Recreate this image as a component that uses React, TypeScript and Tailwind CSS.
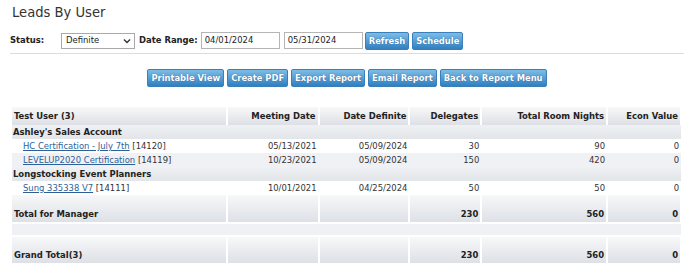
import React from "react";

const F = { fontFamily: '"DejaVu Sans Condensed", "DejaVu Sans", Verdana, sans-serif' };

function Btn({ children }: { children: React.ReactNode }) {
  return (
    <button className="h-[18px] rounded-[2px] border border-[#3a7fba] bg-gradient-to-b from-[#7cbce6] to-[#2f7fc0] px-[3px] text-[9.3px] font-bold leading-none text-white [text-shadow:0_0_1px_#1d5a8c]">
      {children}
    </button>
  );
}

const hdr = "bg-gradient-to-b from-[#f7f8f9] to-[#dde0e5] border-r-2 border-white";
const grp = "bg-gradient-to-b from-[#eff1f3] to-[#e2e5e9]";

export default function App() {
  const rows = [
    { type: "group", name: "Ashley's Sales Account" },
    { type: "data", name: "HC Certification - July 7th", id: "14120", md: "05/13/2021", dd: "05/09/2024", del: "30", rn: "90", ev: "0", alt: false },
    { type: "data", name: "LEVELUP2020 Certification", id: "14119", md: "10/23/2021", dd: "05/09/2024", del: "150", rn: "420", ev: "0", alt: true },
    { type: "group", name: "Longstocking Event Planners" },
    { type: "data", name: "Sung 335338 V7", id: "14111", md: "10/01/2021", dd: "04/25/2024", del: "50", rn: "50", ev: "0", alt: false },
  ];
  return (
    <div className="h-[278px] w-[694px] overflow-hidden bg-white text-[#222]" style={F}>
      <div className="pl-[12px] pt-[2px] text-[14.6px] leading-[20px] text-[#333]">Leads By User</div>
      <div className="mt-[10px] flex h-[17px] items-center pl-[10px] text-[9.4px]">
        <span className="w-[51px] font-bold">Status:</span>
        <div className="flex h-[16px] w-[74px] items-center justify-between border border-[#a9a9a9] bg-white pl-[4px] pr-[3px]">
          <span>Definite</span>
          <svg width="8" height="6" viewBox="0 0 8 6"><path d="M1 1.5 L4 4.5 L7 1.5" fill="none" stroke="#333" strokeWidth="1.4" /></svg>
        </div>
        <span className="ml-[4px] font-bold">Date Range:</span>
        <div className="ml-[3px] flex h-[17px] w-[79px] items-center border border-[#b5b5b5] pl-[3px]">04/01/2024</div>
        <div className="ml-[4px] flex h-[17px] w-[79px] items-center border border-[#b5b5b5] pl-[3px]">05/31/2024</div>
        <div className="ml-[2px] flex gap-[3px]">
          <Btn>Refresh</Btn>
          <Btn>Schedule</Btn>
        </div>
      </div>
      <div className="mx-[10px] mt-[4px] h-px bg-[#dcdcdc]" />
      <div className="mt-[15px] flex justify-center gap-[3px]">
        <Btn>Printable View</Btn>
        <Btn>Create PDF</Btn>
        <Btn>Export Report</Btn>
        <Btn>Email Report</Btn>
        <Btn>Back to Report Menu</Btn>
      </div>
      <table className="ml-[12px] mt-[20px] w-[670px] border-collapse text-[9.4px] leading-[12px]">
        <colgroup>
          <col className="w-[215px]" />
          <col className="w-[92px]" />
          <col className="w-[91px]" />
          <col className="w-[72px]" />
          <col className="w-[126px]" />
          <col className="w-[74px]" />
        </colgroup>
        <thead>
          <tr className="h-[18px] font-bold">
            <td className={`${hdr} pl-[2px] text-left`}>Test User (3)</td>
            <td className={`${hdr} pr-[2px] text-right`}>Meeting Date</td>
            <td className={`${hdr} pr-[2px] text-right`}>Date Definite</td>
            <td className={`${hdr} pr-[2px] text-right`}>Delegates</td>
            <td className={`${hdr} pr-[2px] text-right`}>Total Room Nights</td>
            <td className={`${hdr} border-r-0 pr-[2px] text-right`}>Econ Value</td>
          </tr>
        </thead>
        <tbody>
          {rows.map((r, i) =>
            r.type === "group" ? (
              <tr key={i} className={`h-[14px] ${grp}`}>
                <td colSpan={6} className="p-0 pl-[1px] font-bold">{r.name}</td>
              </tr>
            ) : (
              <tr key={i} className={`h-[14px] text-[#333] ${r.alt ? "bg-[#f0f1f4]" : "bg-white"}`}>
                <td className="p-0 pl-[11px]">
                  <span className="text-[#2e5f99] underline">{r.name}</span>
                  <span> [{r.id}]</span>
                </td>
                <td className="p-0 pr-[2px] text-right">{r.md}</td>
                <td className="p-0 pr-[2px] text-right">{r.dd}</td>
                <td className="p-0 pr-[2px] text-right">{r.del}</td>
                <td className="p-0 pr-[2px] text-right">{r.rn}</td>
                <td className="p-0 pr-[2px] text-right">{r.ev}</td>
              </tr>
            )
          )}
          <tr className="h-[27px] align-bottom font-bold">
            <td className={`${hdr} pb-[2px] pl-[2px]`}>Total for Manager</td>
            <td className={hdr} />
            <td className={hdr} />
            <td className={`${hdr} pb-[2px] pr-[2px] text-right`}>230</td>
            <td className={`${hdr} pb-[2px] pr-[2px] text-right`}>560</td>
            <td className={`${hdr} border-r-0 pb-[2px] pr-[2px] text-right`}>0</td>
          </tr>
          <tr className="h-[2px]"><td colSpan={6} className="p-0 leading-[2px]" /></tr>
          <tr className="h-[11px] bg-[#f0f1f4]"><td colSpan={6} className="p-0" /></tr>
          <tr className="h-[2px]"><td colSpan={6} className="p-0 leading-[2px]" /></tr>
          <tr className="h-[26px] align-bottom font-bold">
            <td className={`${hdr} pb-[2px] pl-[2px]`}>Grand Total(3)</td>
            <td className={hdr} />
            <td className={hdr} />
            <td className={`${hdr} pb-[2px] pr-[2px] text-right`}>230</td>
            <td className={`${hdr} pb-[2px] pr-[2px] text-right`}>560</td>
            <td className={`${hdr} border-r-0 pb-[2px] pr-[2px] text-right`}>0</td>
          </tr>
        </tbody>
      </table>
    </div>
  );
}
